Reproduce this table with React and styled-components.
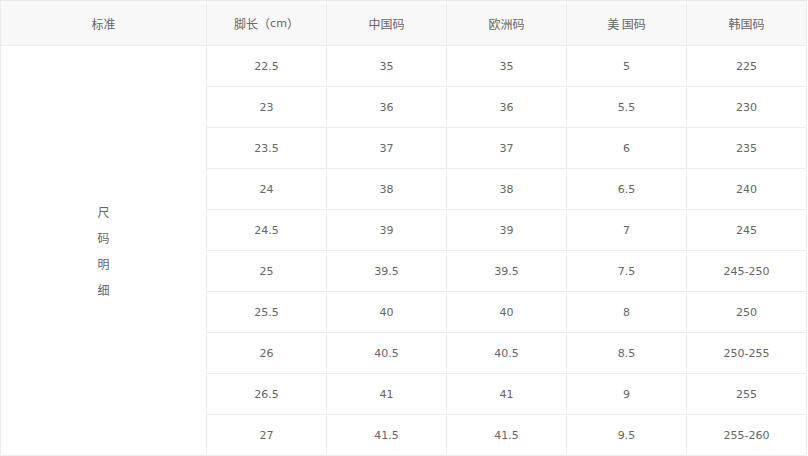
import React from "react";
import styled, { createGlobalStyle } from "styled-components";

const Global = createGlobalStyle`
  html, body { margin: 0; padding: 0; background: #fff; }
  body { font-family: "DejaVu Sans", "Noto Sans CJK SC", sans-serif; }
`;

const Grid = styled.div`
  display: grid;
  grid-template-columns: 205px repeat(5, 119px);
  grid-template-rows: 44px repeat(10, 40px);
  gap: 1px;
  padding: 1px;
  background: #ececec;
  width: max-content;
  color: #666;
`;

const Cell = styled.div`
  display: flex;
  align-items: center;
  justify-content: center;
  background: ${(p) => (p.$head ? "#f8f8f8" : "#fff")};
  font-size: ${(p) => (p.$head ? "12px" : "11px")};
  font-family: ${(p) =>
    p.$head
      ? '"Noto Sans CJK SC", "DejaVu Sans", sans-serif'
      : '"DejaVu Sans", "Noto Sans CJK SC", sans-serif'};
  white-space: nowrap;
`;

const SideCell = styled(Cell)`
  grid-column: 1;
  grid-row: 2 / span 10;
  flex-direction: column;
`;

const SideChar = styled.span`
  display: block;
  font-family: "Noto Sans CJK SC", sans-serif;
  font-size: 12px;
  line-height: 26px;
`;

const Unit = styled.span`
  font-family: "DejaVu Sans", sans-serif;
  font-size: 11px;
`;

const headers = ["中国码", "欧洲码", "美 国码", "韩国码"];

const rows = [
  ["22.5", "35", "35", "5", "225"],
  ["23", "36", "36", "5.5", "230"],
  ["23.5", "37", "37", "6", "235"],
  ["24", "38", "38", "6.5", "240"],
  ["24.5", "39", "39", "7", "245"],
  ["25", "39.5", "39.5", "7.5", "245-250"],
  ["25.5", "40", "40", "8", "250"],
  ["26", "40.5", "40.5", "8.5", "250-255"],
  ["26.5", "41", "41", "9", "255"],
  ["27", "41.5", "41.5", "9.5", "255-260"],
];

export default function App() {
  return (
    <>
      <Global />
      <Grid>
        <Cell $head>标准</Cell>
        <Cell $head>
          脚长（<Unit>cm</Unit>）
        </Cell>
        {headers.map((h) => (
          <Cell $head key={h}>
            {h}
          </Cell>
        ))}
        <SideCell>
          {["尺", "码", "明", "细"].map((c) => (
            <SideChar key={c}>{c}</SideChar>
          ))}
        </SideCell>
        {rows.map((r, i) =>
          r.map((v, j) => <Cell key={i + "-" + j}>{v}</Cell>)
        )}
      </Grid>
    </>
  );
}
